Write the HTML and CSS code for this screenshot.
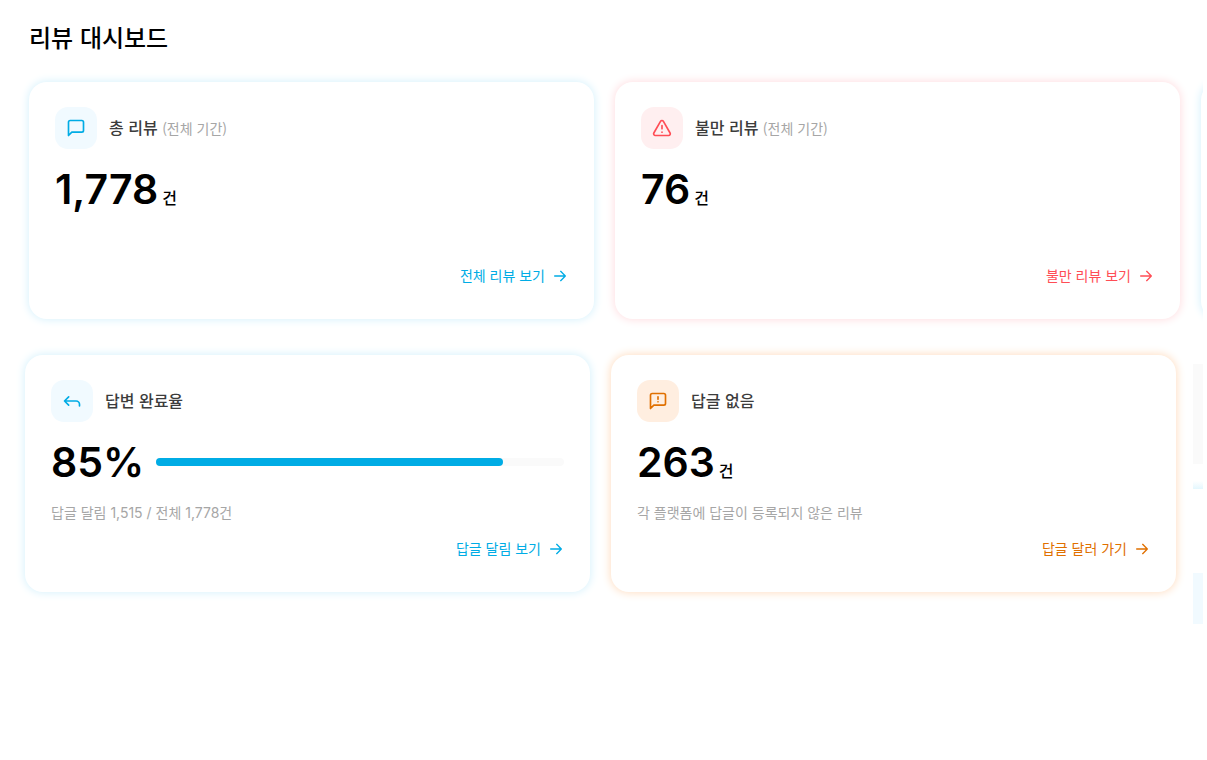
FILE: index.html
```
<!DOCTYPE html>
<html lang="ko">
<head>
    <meta charset="UTF-8">
    <title>리뷰 대시보드</title>
    <link rel="stylesheet" href="styles.css">
</head>
<body>
    <svg width="0" height="0" class="icon-defs">
        <symbol id="arrow" viewBox="0 0 24 24">
            <path d="M4 13.5h16M13 6.5l7 7-7 7"/>
        </symbol>
    </svg>

    <main class="dashboard">
        <h1>리뷰 대시보드</h1>

        <section class="row">
            <div class="cards">
                <article class="card blue">
                    <div class="card-header">
                        <div class="icon-box">
                            <svg viewBox="0 0 24 24"><path d="M21 15a2 2 0 0 1-2 2H7l-4 4V5a2 2 0 0 1 2-2h14a2 2 0 0 1 2 2z"/></svg>
                        </div>
                        <h2>총 리뷰 <span class="period">(전체 기간)</span></h2>
                    </div>
                    <div class="value"><strong>1,778</strong><span class="unit">건</span></div>
                    <a href="#" class="more">전체 리뷰 보기 <svg><use href="#arrow"/></svg></a>
                </article>
                <article class="card red">
                    <div class="card-header">
                        <div class="icon-box">
                            <svg viewBox="0 0 24 24"><path d="M21.7 18l-8-14a2 2 0 0 0-3.5 0l-8 14A2 2 0 0 0 4 21h16a2 2 0 0 0 1.7-3zM12 9v4M12 17h.01"/></svg>
                        </div>
                        <h2>불만 리뷰 <span class="period">(전체 기간)</span></h2>
                    </div>
                    <div class="value"><strong>76</strong><span class="unit">건</span></div>
                    <a href="#" class="more">불만 리뷰 보기 <svg><use href="#arrow"/></svg></a>
                </article>
            </div>
            <div class="card blue next-card"></div>
        </section>

        <section class="row row-second">
            <div class="cards">
                <article class="card blue">
                    <div class="card-header">
                        <div class="icon-box">
                            <svg viewBox="0 0 24 24"><path d="M8 17l-5-5 5-5M21 18v-2a4 4 0 0 0-4-4H3"/></svg>
                        </div>
                        <h2>답변 완료율</h2>
                    </div>
                    <div class="value">
                        <strong>85%</strong>
                        <div class="progress"><div class="progress-fill" style="width: 85%"></div></div>
                    </div>
                    <p class="desc">답글 달림 <span class="num">1,515 /</span> 전체 <span class="num">1,778</span>건</p>
                    <a href="#" class="more">답글 달림 보기 <svg><use href="#arrow"/></svg></a>
                </article>
                <article class="card orange">
                    <div class="card-header">
                        <div class="icon-box">
                            <svg viewBox="0 0 24 24"><path d="M21 15a2 2 0 0 1-2 2H7l-4 4V5a2 2 0 0 1 2-2h14a2 2 0 0 1 2 2zM12 7v3M12 13h.01"/></svg>
                        </div>
                        <h2>답글 없음</h2>
                    </div>
                    <div class="value"><strong>263</strong><span class="unit">건</span></div>
                    <p class="desc">각 플랫폼에 답글이 등록되지 않은 리뷰</p>
                    <a href="#" class="more">답글 달러 가기 <svg><use href="#arrow"/></svg></a>
                </article>
            </div>
            <div class="side">
                <div class="side-gray"></div>
                <div class="side-fade"></div>
                <div class="side-blue"></div>
            </div>
        </section>
    </main>
</body>
</html>
```
FILE: styles.css
```
* {
    box-sizing: border-box;
}
body {
    margin: 0;
    background-color: #fff;
    color: #000;
    font-family: "Noto Sans CJK KR", sans-serif;
}
.icon-defs {
    position: absolute;
}
.dashboard {
    margin-right: 4px;
    padding: 19px 0 40px 25px;
    overflow: hidden;
}
h1 {
    margin: 0 0 27px 4px;
    font-size: 24px;
    line-height: 36px;
    font-weight: 500;
}
h2 {
    margin: 0;
    padding-bottom: 2px;
    font-size: 16px;
    line-height: 24px;
    font-weight: 500;
    color: #3c3c3c;
}
.row {
    display: flex;
    align-items: flex-start;
    gap: 21px;
    margin-left: 4px;
}
.row-second {
    gap: 17px;
    margin: 36px 0 0;
}
.cards {
    flex: 1;
    display: grid;
    grid-template-columns: 1fr 1fr;
    gap: 21px;
}
.card {
    display: flex;
    flex-direction: column;
    min-height: 237px;
    padding: 25px 26px 26px;
    border-radius: 18px;
    background-color: #fff;
}
.blue {
    --main: #00ace5;
    --soft: #f1faff;
    box-shadow: 0 0 8px 1px #d8f2fc;
}
.red {
    --main: #ff4d55;
    --soft: #ffeff0;
    box-shadow: 0 0 8px 1px #ffdfe2;
}
.orange {
    --main: #e07000;
    --soft: #ffeee0;
    box-shadow: 0 0 8px 1px #ffdfc4;
}
.next-card {
    flex: none;
    width: 60px;
    margin-right: -58px;
}
.card-header {
    display: flex;
    align-items: center;
    gap: 12px;
}
.icon-box {
    display: flex;
    align-items: center;
    justify-content: center;
    width: 42px;
    height: 42px;
    border-radius: 13px;
    background-color: var(--soft);
}
svg {
    width: 20px;
    height: 20px;
    fill: none;
    stroke: var(--main);
    stroke-width: 2;
    stroke-linecap: round;
    stroke-linejoin: round;
}
.period {
    font-size: 14px;
    font-weight: 400;
    color: #a6a6a6;
}
.value {
    display: flex;
    align-items: baseline;
    margin-top: 14px;
    line-height: 52px;
}
.value strong {
    font-family: Inter, sans-serif;
    font-size: 41px;
    font-weight: 600;
}
.unit {
    margin-left: 4px;
    font-size: 16px;
    line-height: 20px;
    font-weight: 500;
}
.progress {
    flex: 1;
    align-self: center;
    height: 8px;
    margin-left: 12px;
    border-radius: 4px;
    background-color: #fafafa;
}
.progress-fill {
    height: 8px;
    border-radius: 4px;
    background-color: #00ace5;
}
.desc {
    margin: 14px 0 0;
    font-size: 14px;
    line-height: 20px;
    color: #a6a6a6;
}
.num {
    font-family: Inter, sans-serif;
}
.more {
    display: flex;
    align-items: center;
    align-self: flex-end;
    gap: 7px;
    margin-top: auto;
    padding: 6px 0 8px;
    font-size: 14px;
    line-height: 20px;
    color: var(--main);
    text-decoration: none;
}
.more svg {
    width: 16px;
    height: 16px;
}
.side {
    width: 10px;
    padding-top: 9px;
}
.side-gray {
    height: 100px;
    background-color: #fafafa;
}
.side-fade {
    height: 8px;
    margin-top: 17px;
    background: linear-gradient(#fff, #e4f7fe);
}
.side-blue {
    height: 51px;
    margin-top: 84px;
    background-color: #f1faff;
}
```
